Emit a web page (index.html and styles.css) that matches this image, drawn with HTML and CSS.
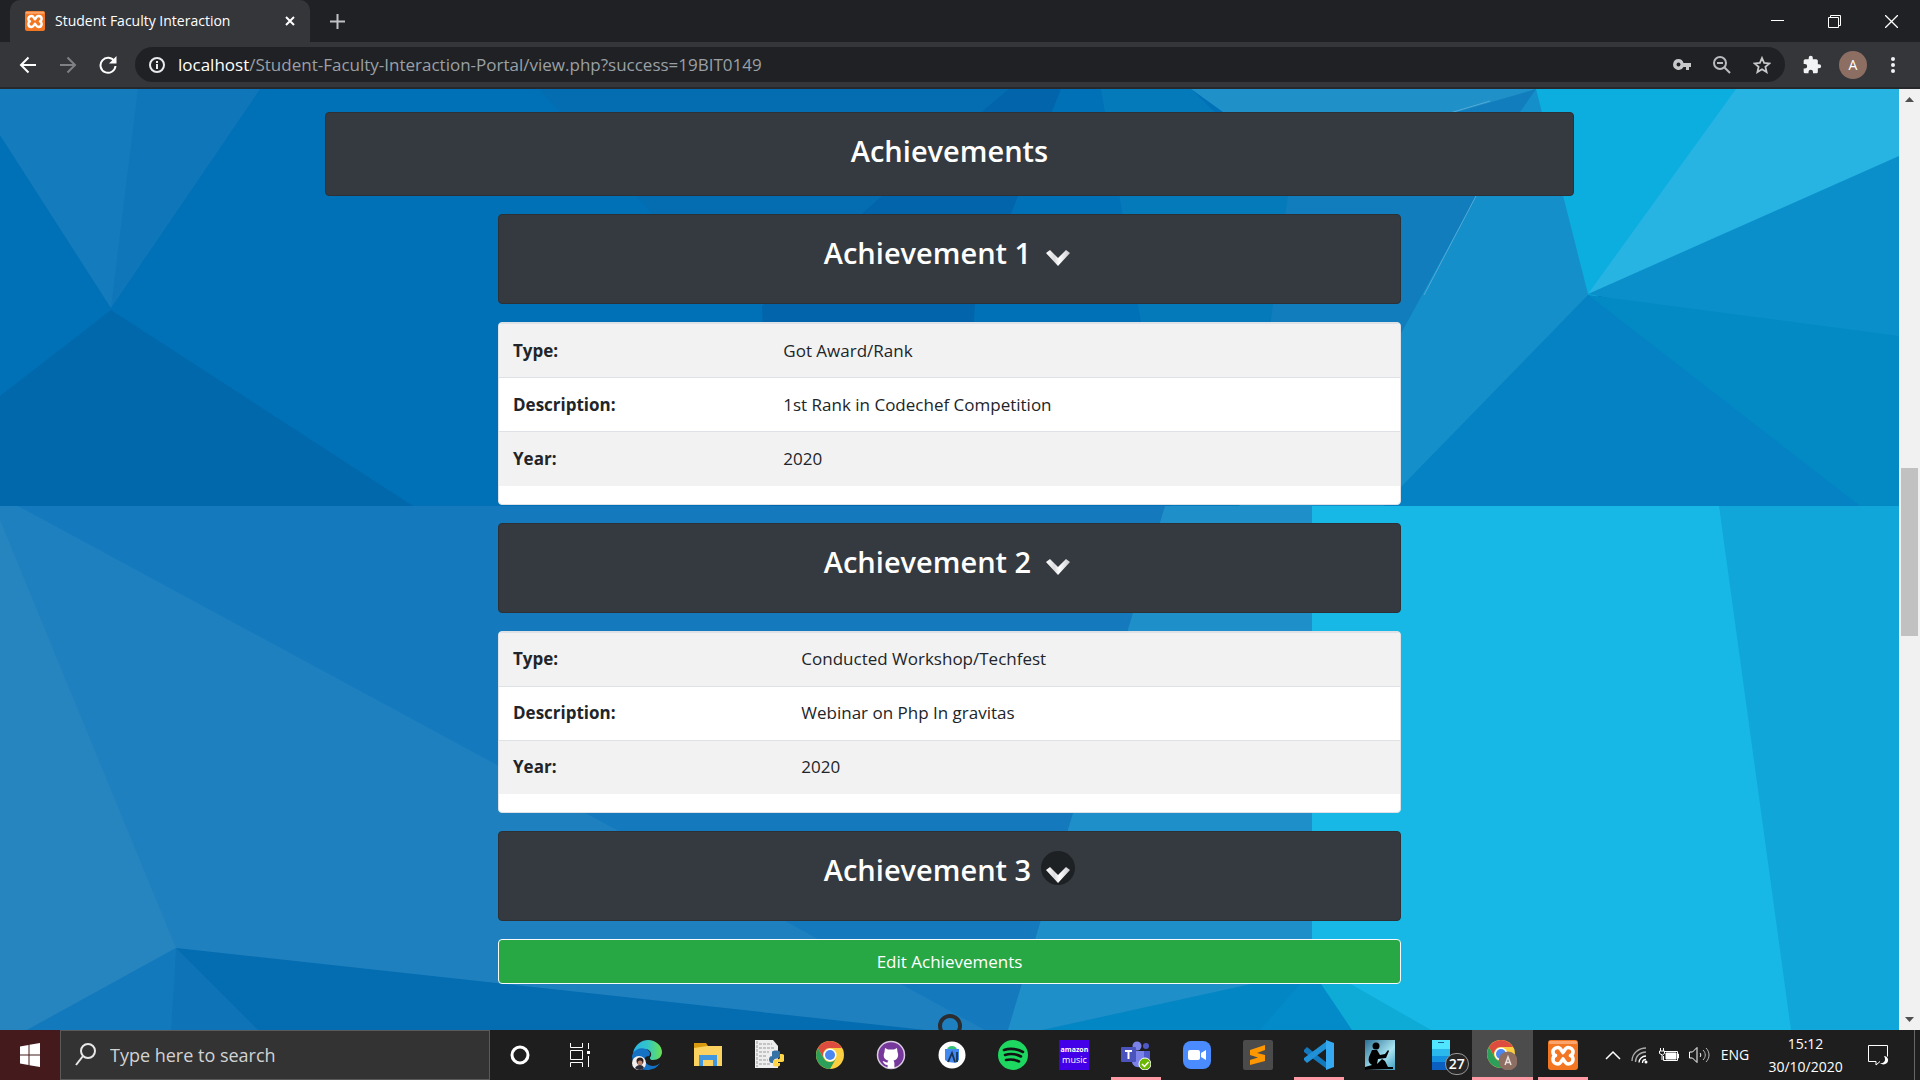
FILE: index.html
```html
<!DOCTYPE html>
<html lang="en">
<head>
<meta charset="utf-8">
<title>Student Faculty Interaction</title>
<link rel="stylesheet" href="styles.css">
</head>
<body>
<svg class="defs" aria-hidden="true">
  <defs>
    <linearGradient id="silver" x1="0" y1="0" x2="1" y2="0"><stop offset="0" stop-color="#fff"/><stop offset=".35" stop-color="#dcdcde"/><stop offset=".55" stop-color="#fff"/><stop offset="1" stop-color="#c8c8cc"/></linearGradient>
    <linearGradient id="edgeGreen" x1="0" y1="0" x2="1" y2="0"><stop offset="0" stop-color="#2bb3ea"/><stop offset=".5" stop-color="#33c6c8"/><stop offset="1" stop-color="#6be04f"/></linearGradient>
    <linearGradient id="kindleSky" x1="0" y1="0" x2="1" y2="1"><stop offset="0" stop-color="#2b6f93"/><stop offset=".6" stop-color="#a8e4f2"/><stop offset="1" stop-color="#3c9cc0"/></linearGradient>
    <symbol id="xampp" viewBox="0 0 30 30">
      <rect width="30" height="30" rx="3" fill="#f37623"/><rect x="1" y="1" width="28" height="3" rx="1" fill="#f9a56c"/>
      <path d="M15 12.500C13 10 12.500 7.500 10 7.500c-3 0-5 2-5 4.500 0 1.500 1 3 2.500 3.500C6 16 5 17.500 5 19.500 5 22 7 24 10 24c2.500 0 3-2.500 5-5 2 2.500 2.500 5 5 5 3 0 5-2 5-4.500 0-2-1-3.500-2.500-4C24 15 25 13.500 25 12c0-2.500-2-4.500-5-4.500-2.500 0-3 2.500-5 5z" fill="#f37623" stroke="#fff" stroke-width="3.600" stroke-linejoin="round"/>
    </symbol>
    <symbol id="chrome" viewBox="0 0 28 28">
      <circle cx="14" cy="14" r="14" fill="#fbcf3f"/>
      <path d="M1.900 7A14 14 0 0 1 26.100 7H14a7 7 0 0 0-6.100 10.500z" fill="#de4b3f"/>
      <path d="M1.900 7A14 14 0 0 0 14 28l6.100-10.500A7 7 0 0 1 7.900 17.500z" fill="#2ca05a"/>
      <circle cx="14" cy="14" r="6.500" fill="#fff"/><circle cx="14" cy="14" r="5" fill="#4a87f0"/>
    </symbol>
    <symbol id="caret" viewBox="0 0 34 34"><path d="M5 19l4-3 8 8 8-8 4 3-12 13z" fill="url(#silver)"/></symbol>
  </defs>
</svg>

<header class="tabs">
  <div class="tab">
    <svg class="favicon"><use href="#xampp"/></svg>
    <span class="tab-title">Student Faculty Interaction</span>
    <button class="plain" aria-label="Close tab"><svg width="10" height="10" viewBox="0 0 10 10"><path d="M1 1l8 8M9 1L1 9" stroke="#fff" stroke-width="2"/></svg></button>
  </div>
  <button class="plain new-tab" aria-label="New tab"><svg width="15" height="15" viewBox="0 0 15 15"><path d="M7.500 0v15M0 7.500h15" stroke="#bfc1c4" stroke-width="2"/></svg></button>
  <div class="window-buttons">
    <button class="plain" aria-label="Minimize"><svg width="13" height="13"><path d="M0 5.500h13" stroke="#fff"/></svg></button>
    <button class="plain" aria-label="Restore"><svg width="13" height="13" fill="none" stroke="#fff"><path d="M.5 2.500h10v10H.5zM2.500 2.500v-2h10v10h-2"/></svg></button>
    <button class="plain" aria-label="Close"><svg width="13" height="13"><path d="M0 0l13 13M13 0L0 13" stroke="#fff" stroke-width="1.300"/></svg></button>
  </div>
</header>

<nav class="toolbar">
  <button class="plain nav-button" aria-label="Back"><svg width="18" height="18" fill="none" stroke="#fff" stroke-width="2"><path d="M17 9H2M9.500 1.500L2 9l7.500 7.500"/></svg></button>
  <button class="plain nav-button" aria-label="Forward"><svg width="18" height="18" fill="none" stroke="#7f8184" stroke-width="2"><path d="M1 9h15M8.500 1.500L16 9l-7.500 7.500"/></svg></button>
  <button class="plain nav-button" aria-label="Reload"><svg width="18" height="18" fill="none" stroke="#fff" stroke-width="2"><path d="M15.500 5.500A7.500 7.500 0 1 0 16.500 10"/><path d="M17.500 0v7.500H10l3-3z" fill="#fff" stroke="none"/></svg></button>
  <div class="omnibox">
    <svg width="16" height="16" fill="none" stroke="#e8eaed" stroke-width="2"><circle cx="8" cy="8" r="7"/><path d="M8 7v5M8 4v2"/></svg>
    <span class="url"><span class="host">localhost</span>/Student-Faculty-Interaction-Portal/view.php?success=19BIT0149</span>
    <button class="plain" aria-label="Passwords"><svg width="18" height="12"><path d="M5.500 0a5.500 5.500 0 1 0 5 8H13v3h3V8h2V4h-7.500a5.500 5.500 0 0 0-5-4zm0 3.500a2 2 0 1 1 0 4 2 2 0 0 1 0-4z" fill="#c6c8ca" fill-rule="evenodd"/></svg></button>
    <button class="plain" aria-label="Zoom"><svg width="18" height="18" fill="none" stroke="#b9bbbe" stroke-width="2"><circle cx="7" cy="7" r="6"/><path d="M11.500 11.500l5.500 5.500M4 7h6"/></svg></button>
    <button class="plain" aria-label="Bookmark"><svg width="18" height="18" viewBox="0 0 18 18"><path d="M9 2l2.100 4.900 5.300.500-4 3.500 1.200 5.200L9 13.300l-4.600 2.800 1.200-5.200-4-3.500 5.300-.500z" fill="none" stroke="#c6c8ca" stroke-width="1.800"/></svg></button>
  </div>
  <button class="plain nav-button" aria-label="Extensions"><svg width="20" height="20" viewBox="0 0 24 24"><path fill="#f1f3f4" d="M20.500 11H19V7c0-1.100-.900-2-2-2h-4V3.500a2.500 2.500 0 0 0-5 0V5H4c-1.100 0-2 .900-2 2v3.800h1.500a2.700 2.700 0 0 1 0 5.400H2V20c0 1.100.900 2 2 2h3.800v-1.500a2.700 2.700 0 0 1 5.400 0V22H17c1.100 0 2-.900 2-2v-4h1.500a2.500 2.500 0 0 0 0-5z"/></svg></button>
  <button class="avatar">A</button>
  <button class="plain nav-button" aria-label="Menu"><svg width="4" height="18" fill="#f1f3f4"><circle cx="2" cy="3" r="2"/><circle cx="2" cy="9" r="2"/><circle cx="2" cy="15" r="2"/></svg></button>
</nav>

<div class="viewport">
  <main class="page">
    <svg class="backdrop" viewBox="0 89 1899 941" preserveAspectRatio="none" aria-hidden="true">
      <path fill="#0071b7" d="M0 89h1899v417H0z"/>
      <path fill="#0f76b9" d="M0 89h260L111 308 0 135z"/><path fill="#147bbd" d="M0 89h138L111 308 0 135z"/>
      <path fill="#0268ac" d="M111 310l302 196H0V396z"/>
      <path fill="#046cb1" d="M539 89h520l-159 150-180 50z"/>
      <path fill="#0264aa" d="M1009 89h52l-75 233-20 184H770l-8-200 100-92 20-18z"/>
      <path fill="#0071b7" d="M1061 89h40l40 233 30 184H960l15-202 43-108z"/>
      <path fill="#047aba" d="M1101 89h90l110 107-31 126 30 184h-129l-30-184z"/>
      <path fill="#127dbd" d="M1223 112l227-12 86-11-60 107-75 137-101 173h-60l30-180 18-130z"/>
      <path fill="#1f90c8" d="M1191 89h345l-86 25-227-2z"/>
      <path fill="#148fc9" d="M1536 89h10l52 205-10 212h-349l162-173 75-137 44-84z"/>
      <path d="M1490 101l-40 12M1476 196l-52 99" stroke="#54a9d6" stroke-width="1"/>
      <path fill="#0caee0" d="M1536 89h220l-160 210-8-5z"/>
      <path fill="#0a8fca" d="M1588 294l311-148v210z"/>
      <path fill="#27b4e3" d="M1736 89h163v67l-311 138z"/>
      <path fill="#0582c3" d="M1588 295l290 120v91h-494l17-19z"/>
      <path fill="#0389c4" d="M1588 295l311 41v170h-39z"/>
      <path fill="#147abd" d="M0 506h1200v524H0z"/>
      <path fill="#1e80bf" d="M0 506h18l479 259 288 156 200 109H0z"/>
      <path fill="#2684bf" d="M0 520l176 428-149 82H0z"/>
      <path fill="#127abc" d="M176 948l90 82H27z"/><path fill="#0f74b7" d="M176 948l90 82h-95z"/>
      <path fill="#046cb0" d="M176 948l749 82H258z"/>
      <path fill="#1f8fc9" d="M1165 506h147v524h-304z"/>
      <path fill="#17b8e6" d="M1312 506h587v524h-587z"/>
      <path fill="#10a6d9" d="M1719 506h180v524h-108z"/>
      <path fill="#0386c4" d="M1042 1030l209-46 61-26 40 72z"/>
      <path fill="#038bc9" d="M1260 1030l40-46 12-22 9 22 31 46z"/>
      <path fill="#0dabd6" d="M1352 1030l-31-46-9-22 119 68z"/>
    </svg>
    <div class="container">
      <section class="card dark"><h3>Achievements</h3></section>
      <div class="achievements">
        <section class="card dark"><h3>Achievement 1 <button class="caret" aria-label="Toggle achievement 1"><svg><use href="#caret"/></svg></button></h3></section>
        <section class="card">
          <table class="first">
            <tr><th scope="row">Type:</th><td>Got Award/Rank</td></tr>
            <tr><th scope="row">Description:</th><td>1st Rank in Codechef Competition</td></tr>
            <tr><th scope="row">Year:</th><td>2020</td></tr>
          </table>
        </section>
        <section class="card dark"><h3>Achievement 2 <button class="caret" aria-label="Toggle achievement 2"><svg><use href="#caret"/></svg></button></h3></section>
        <section class="card">
          <table>
            <tr><th scope="row">Type:</th><td>Conducted Workshop/Techfest</td></tr>
            <tr><th scope="row">Description:</th><td>Webinar on Php In gravitas</td></tr>
            <tr><th scope="row">Year:</th><td>2020</td></tr>
          </table>
        </section>
        <section class="card dark"><h3>Achievement 3 <button class="caret active" aria-label="Toggle achievement 3"><svg><use href="#caret"/></svg></button></h3></section>
        <button class="edit">Edit Achievements</button>
        <svg class="user" viewBox="0 0 46 48" fill="none" stroke="#2b2d30" stroke-width="4" aria-hidden="true"><circle cx="23" cy="12" r="10"/><path d="M3 47c0-14 8-19 20-19s20 5 20 19"/></svg>
      </div>
    </div>
  </main>
  <div class="scrollbar" aria-hidden="true">
    <svg width="9" height="5"><path d="M0 5h9L4.500 0z" fill="#505050"/></svg>
    <div class="track"><div class="before"></div><div class="thumb"></div><div class="after"></div></div>
    <svg width="9" height="5"><path d="M0 0h9L4.500 5z" fill="#505050"/></svg>
  </div>
</div>

<footer class="taskbar">
  <button class="plain start" aria-label="Start"><svg width="20" height="24" viewBox="0 0 20 24" fill="#fff"><path d="M0 3.500l8.500-1.500v9.500H0zM9.500 1.800L20 0v11.500H9.500zM0 12.500h8.500V22L0 20.500zM9.500 12.500H20V24L9.500 22.200z"/></svg></button>
  <label class="search">
    <svg width="21" height="24" fill="none" stroke="#e8e8e8" stroke-width="2"><circle cx="13" cy="8" r="7"/><path d="M8 13l-7 9"/></svg>
    <input type="text" placeholder="Type here to search" aria-label="Type here to search">
  </label>
  <button class="plain system" aria-label="Cortana"><svg width="20" height="20" fill="none" stroke="#fff" stroke-width="3"><circle cx="10" cy="10" r="8"/></svg></button>
  <button class="plain system" aria-label="Task view"><svg width="20" height="24" fill="none" stroke="#fff"><path d="M.5 0v4.500h12V0M.5 24v-4.500h12V24M.5 7.500h12v9H.5zM18.500 0v6M18.500 13v11"/><path d="M17 8h3v3h-3z" fill="#fff" stroke="none"/></svg></button>
  <div class="apps">
    <button class="plain" aria-label="Edge"><svg viewBox="0 0 30 30"><path d="M1 13C3 4 10 0 16 0c8 0 14 6 14 12 0 5-4 8-9 8-3 0-4-2-2-4 1-4-2-7-6-7C7 9 3 12 1 13z" fill="url(#edgeGreen)"/><path d="M1 13c3-4 8-6 13-4 4 2 5 5 3 7-4 0-6 3-3 7 4 4 10 4 14 0-3 5-8 7-13 7C6 30 0 23 0 16z" fill="#1471c4"/><circle cx="7" cy="23" r="7" fill="#f2f0ef"/><circle cx="8" cy="21" r="3.500" fill="#2a1c1b"/><circle cx="8" cy="23" r="2.500" fill="#b98570"/><path d="M3 28c2-4 8-4 9 0-3 3-7 2-9 0z" fill="#2b2c36"/></svg></button>
    <button class="plain" aria-label="File Explorer"><svg viewBox="0 0 30 30"><path d="M1 3h12l2 3-2 3H1z" fill="#d99a0f"/><path d="M1 8l13-2h15v20H1z" fill="#fbd25f"/><path d="M6 26V15h18v11h-4v-6H10v6z" fill="#4097dd"/></svg></button>
    <button class="plain" aria-label="Python"><svg viewBox="0 0 30 30"><path d="M1 0h18l5 6v22H1z" fill="#eee"/><path d="M5 4h13M5 8h15M5 12h10M5 16h8M5 20h9M5 24h12M3 1v26" stroke="#999" stroke-dasharray="3 1"/><path d="M18 17v-5c0-2 8-2 8 0v5c0 2-6 1-6 3v3h-2c-4 0-4-7 0-7h6" fill="#3672a5"/><path d="M26 14h2c4 0 4 8 0 8h-5v1h3v2c0 2-7 2-7 0v-4c0-2 7-1 7-3z" fill="#ffd445"/></svg></button>
    <button class="plain" aria-label="Chrome"><svg viewBox="-1 -1 30 30"><use href="#chrome" width="28" height="28"/></svg></button>
    <button class="plain" aria-label="GitHub Desktop"><svg viewBox="0 0 30 30"><circle cx="15" cy="15" r="13.500" fill="#76389b" stroke="#d8cbe0" stroke-width="1.500"/><path d="M9 8l3 1.500h6L21 8l.500 4c2 5-1 8-4 8.500.700 1 .900 2 .900 3v4.500h-6.800v-3c-3 0-4-2-5-4 2 0 3 2 5 1.500 0-1 .300-1.500.900-2-4-.500-6-4-4-8.500z" fill="#fff"/></svg></button>
    <button class="plain" aria-label="Android Studio"><svg viewBox="0 0 30 30"><circle cx="15" cy="15" r="13.500" fill="#fff"/><path d="M10 10a5 4 0 0 1 10 0z" fill="#32c174"/><path d="M8 9h14v11l-3 3-8-1-3-2z" fill="#4387f1"/><path d="M11 22l4-9 3 9M20 12v10" stroke="#173553" stroke-width="1.800" fill="none"/></svg></button>
    <button class="plain" aria-label="Spotify"><svg viewBox="0 0 30 30"><circle cx="15" cy="15" r="15" fill="#1ed760"/><path d="M6 10c6-2 13-1 19 2M7 15c5-1.500 11-1 16 1.500M8 20c5-1 9-.500 13 1.500" fill="none" stroke="#121212" stroke-width="2.600" stroke-linecap="round"/></svg></button>
    <button class="plain music" aria-label="Amazon Music"><span class="tile"><small>amazon</small>music</span></button>
    <button class="plain running" aria-label="Teams"><svg viewBox="0 0 30 30"><circle cx="16" cy="6" r="4.500" fill="#7b83eb"/><circle cx="25" cy="6" r="3" fill="#5059c9"/><path d="M20 11h9v9c0 5-6 6-8 3z" fill="#5059c9"/><path d="M10 11h13v10c0 8-11 8-12 1z" fill="#7b83eb"/><rect y="7" width="15" height="15" rx="1" fill="#4b53bc"/><path d="M4 11h7M7.500 11v8" stroke="#fff" stroke-width="2"/><circle cx="24" cy="24" r="6" fill="#6bb700" stroke="#fff"/><path d="M21 24l2.500 2.500L27.500 22" fill="none" stroke="#fff" stroke-width="1.500"/></svg></button>
    <button class="plain" aria-label="Zoom"><svg viewBox="0 0 30 30"><rect x="1" y="1" width="28" height="28" rx="8" fill="#4a8cff"/><rect x="6" y="10" width="12" height="10" rx="2" fill="#fff"/><path d="M19 13l5-3v10l-5-3z" fill="#fff"/></svg></button>
    <button class="plain" aria-label="Sublime Text"><svg viewBox="0 0 30 30"><rect width="30" height="30" rx="2" fill="#4b4b4b"/><path d="M7 10l15-5v5l-8 3 8 2v6L7 25v-5l8-2.500L7 15z" fill="#ff9800"/></svg></button>
    <button class="plain running" aria-label="Visual Studio Code"><svg viewBox="0 0 30 30"><path d="M0 10l3-3 20 16v6L0 12z" fill="#1478bd"/><path d="M0 20l3 3L23 8V1L0 18z" fill="#2091d6"/><path d="M22 0l8 3v24l-8 3z" fill="#35a9f2"/></svg></button>
    <button class="plain" aria-label="Kindle"><svg viewBox="0 0 30 30"><rect width="30" height="30" fill="url(#kindleSky)"/><circle cx="11" cy="6" r="3.500"/><path d="M0 30v-3l7-2c-3-2-4-4-3-8l3-7h5l3 5 5-1 3-4 1 1-3 7-8 1-1 5 5-5 3 2 3 6h5v2z"/></svg></button>
    <button class="plain phone" aria-label="Your Phone"><svg viewBox="0 0 30 30"><path d="M0 0h18v30H0z" fill="#50e6ff"/><path d="M0 9h18v21H0z" fill="#2bb8ec"/><path d="M0 16h18v14H0z" fill="#1390df"/><path d="M0 22h18v8H0z" fill="#0b5fc0"/><path d="M6 2.500h6" stroke="#16648c"/></svg><span class="count">27</span></button>
    <button class="plain running current" aria-label="Chrome window"><svg viewBox="0 0 30 30"><use href="#chrome" width="28" height="28"/><circle cx="21" cy="21" r="9.500" fill="#8d6e63"/><path d="M18 25l3-8 3 8M19 22.500h4" fill="none" stroke="#e8e0dd" stroke-width="1.500"/></svg></button>
    <button class="plain running" aria-label="XAMPP"><svg viewBox="0 0 30 30"><use href="#xampp" width="30" height="30"/></svg></button>
  </div>
  <div class="tray">
    <svg width="16" height="10" fill="none" stroke="#fff" stroke-width="1.500"><path d="M1 9l7-7 7 7"/></svg>
    <svg width="17" height="17" fill="none" stroke="#aaa" stroke-width="1.300"><path d="M1 14C1 6 8 1 15 1M4.500 15C4.500 9 9 5 15 5" /><path d="M8 15.500C8 12 11 9 15 9M11.500 16c0-2 1.500-3.500 3.500-3.500" stroke="#fff"/><circle cx="15" cy="15" r="1.500" fill="#fff" stroke="none"/></svg>
    <svg width="20" height="14" fill="none" stroke="#fff"><path d="M5 3.500h13.500v9H4.500V8M18.500 6h1v4h-1M1.500 0v3M4.500 0v3M.5 3h5v2.500l-2 1.500-3-1.500zM3 7v5"/><path d="M7 5h10v6H7z" fill="#fff"/></svg>
    <svg width="21" height="18" fill="none" stroke="#fff"><path d="M.5 6h3L8 1.500v15L3.500 12h-3zM11 7c1 1 1 3 0 4"/><path d="M14 4c3 3 3 7 0 10M17 2c4 4 4 10 0 14" stroke="#bbb"/></svg>
    <span class="lang">ENG</span>
    <div class="clock"><time>15:12</time><time>30/10/2020</time></div>
    <svg width="21" height="21" fill="none" stroke="#fff"><path d="M12 16.500L8 20v-3.500H.5V.5h19v11"/><path d="M16 11c3 5-1 8-4 7 3 3 9 1 8-4-1-2-2-3-4-3z" fill="#fff" stroke="none"/></svg>
  </div>
</footer>
</body>
</html>
```
FILE: styles.css
```css
* { box-sizing: border-box; }
body {
  margin: 0;
  height: 100vh;
  display: flex;
  flex-direction: column;
  overflow: hidden;
  background: #202124;
  color: #212529;
  font: 17px/26px "Segoe UI", "Open Sans", "Noto Sans", sans-serif;
}
button, input { font: inherit; color: inherit; }
svg { display: block; flex: none; }
.defs { position: absolute; width: 0; height: 0; }
.plain { display: flex; align-items: center; justify-content: center; padding: 0; border: 0; background: none; }

.tabs { display: flex; align-items: center; height: 42px; background: #202124; color: #fff; }
.tab {
  display: flex;
  align-items: center;
  width: 300px;
  height: 42px;
  margin-left: 10px;
  padding: 0 15px;
  border-radius: 10px 10px 0 0;
  background: #35363a;
}
.favicon { width: 20px; height: 20px; }
.tab-title { flex: 1; margin-left: 10px; font-size: 14px; white-space: nowrap; }
.new-tab { width: 54px; height: 42px; }
.window-buttons { display: flex; margin-left: auto; }
.window-buttons button { width: 57px; height: 36px; }

.toolbar {
  display: flex;
  align-items: center;
  height: 47px;
  padding: 0 8px;
  border-bottom: 2px solid #27282b;
  background: #35363a;
}
.nav-button { width: 40px; height: 40px; }
.nav-button:last-child { width: 38px; }
.omnibox {
  display: flex;
  flex: 1;
  align-items: center;
  gap: 22px;
  height: 35px;
  margin: 0 7px;
  padding: 0 14px;
  border-radius: 18px;
  background: #202124;
}
.url { flex: 1; margin-left: -9px; color: #9aa0a6; font-size: 17px; }
.host { color: #fff; }
.avatar { width: 28px; height: 28px; margin: 0 7px; padding: 0; border: 0; border-radius: 50%; background: #8d6e63; color: #fff; font-size: 14px; line-height: 28px; }

.viewport { display: flex; flex: 1; min-height: 0; }
.page { position: relative; flex: 1; overflow: hidden; }
.backdrop { position: absolute; inset: 0; width: 100%; height: 100%; }
.container { position: relative; width: 90%; max-width: 1249px; margin: 0 auto; padding-top: 23px; }
.achievements { max-width: 903px; margin: 0 auto; }
.card { margin-bottom: 18px; border: 1px solid #dee2e6; border-radius: 4px; background: #fff; overflow: hidden; }
.dark { padding: 19px 22px 25px; border-color: #2d3136; background: #343a40; color: #fff; }
h3 { display: flex; justify-content: center; gap: 10px; margin: 0; font-size: 29px; font-weight: 600; line-height: 38px; }
h3:has(.caret) { padding-bottom: 6px; }
.caret { width: 34px; height: 34px; padding: 0; border: 0; border-radius: 50%; background: none; }
.caret svg { width: 34px; height: 34px; }
.active { background: #1d2124; }

table { width: 100%; margin-bottom: 18px; border-collapse: collapse; }
th, td { height: 54px; padding: 0 14px; border-top: 1px solid #dee2e6; text-align: left; }
th { width: 32%; font-weight: 700; }
.first th { width: 30%; }
tr:nth-child(odd) { background: #f2f2f2; }
.edit { display: block; width: 100%; height: 45px; border: 1px solid #f8f9fa; border-radius: 4px; background: #28a745; color: #fff; }
.user { width: 46px; height: 48px; margin: 30px auto 0; }

.scrollbar { display: flex; flex-direction: column; align-items: center; width: 21px; padding: 8px 2px; background: #f1f1f1; }
.track { display: flex; flex: 1; flex-direction: column; width: 100%; padding: 8px 0; }
.before { flex: 358; }
.thumb { flex: 168; background: #c1c1c1; }
.after { flex: 373; }

.taskbar { display: flex; height: 50px; background: #1e1e1e; color: #fff; }
.start { width: 60px; background: #451a1c; }
.search { display: flex; align-items: center; gap: 14px; width: 430px; padding: 0 14px; border: 1px solid #5a5a5a; background: #333; }
.search input { flex: 1; min-width: 0; padding: 0; border: 0; outline: 0; background: none; font-size: 18px; }
.search input::placeholder { color: #d2d2d2; opacity: 1; }
.system { width: 60px; }
.apps { display: grid; flex: 1; grid-template-columns: repeat(16, 1fr); padding: 0 1px 0 6px; }
.apps button { position: relative; }
.apps svg { width: 30px; height: 30px; }
.running::after { content: ""; position: absolute; bottom: 0; width: 50px; height: 3px; background: #ff9aa5; }
.current { background: #4c4c4c; }
.current::after { width: 100%; }
.tile { display: flex; flex-direction: column; align-items: center; justify-content: center; width: 30px; height: 30px; background: #4300e8; color: #fff; font-size: 9px; line-height: 10px; }
.tile small { font-size: 7px; font-weight: 700; }
.phone { padding-left: 12px; }
.count { position: absolute; right: 3px; bottom: 5px; width: 24px; height: 22px; border: 1px solid #999; border-radius: 11px; background: #262626; font-size: 14px; font-weight: 600; line-height: 20px; text-align: center; }
.tray { display: flex; align-items: center; justify-content: space-between; width: 310px; margin: 0 5px 0 10px; padding-right: 25px; border-right: 1px solid #666; font-size: 14px; }
.clock { display: flex; flex-direction: column; align-items: center; width: 92px; margin-right: 6px; font-size: 14px; line-height: 23px; }
```
